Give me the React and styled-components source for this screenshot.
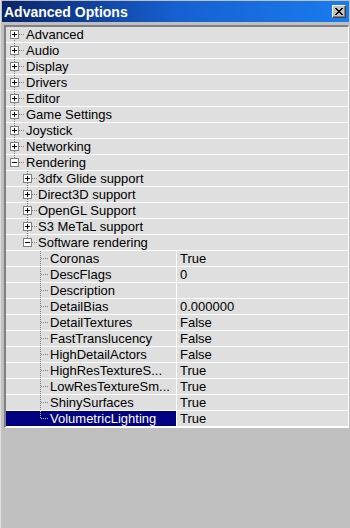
import React from 'react';
import styled, { createGlobalStyle } from 'styled-components';

const Global = createGlobalStyle`
  html, body { margin: 0; padding: 0; background: #c0c0c0; }
  body { font-family: "Liberation Sans", Arial, sans-serif; }
`;

const Window = styled.div`
  width: 350px;
  height: 528px;
  box-sizing: border-box;
  background: #c0c0c0;
  padding: 1px 0 0 1px;
  border-left: 1px solid #dfdfdf;
  display: flex;
  flex-direction: column;
`;

const TitleBar = styled.div`
  height: 21px;
  margin-right: 1px;
  background: linear-gradient(to right, #0a246a 0%, #1660d0 50%, #1a7cee 100%);
  display: flex;
  align-items: center;
  justify-content: space-between;
  padding: 0 3px 0 2px;
`;

const Title = styled.span`
  color: #fff;
  font-weight: bold;
  font-size: 14px;
`;

const CloseBtn = styled.div`
  width: 14px;
  height: 13px;
  box-sizing: border-box;
  background: #c0c0c0;
  border-top: 1px solid #fff;
  border-left: 1px solid #fff;
  border-right: 1px solid #404040;
  border-bottom: 1px solid #404040;
  box-shadow: inset -1px -1px 0 #808080;
  display: flex;
  align-items: center;
  justify-content: center;
`;

const Panel = styled.div`
  margin: 3px 2px 0 2px;
  border-top: 2px solid #808080;
  border-left: 2px solid #808080;
  border-right: 1px solid #fff;
  border-bottom: 1px solid #fff;
  background: #dfdfdf;
  width: 342px;
  box-sizing: content-box;
`;

const Row = styled.div`
  display: flex;
  height: 15px;
  border-bottom: 1px solid #fff;
  font-size: 13px;
  line-height: 15px;
  color: #000;
  white-space: nowrap;
`;

const LabelCell = styled.div`
  display: flex;
  align-items: center;
  width: ${p => (p.$full ? '340px' : '170px')};
  background: ${p => (p.$selected ? '#000080' : 'transparent')};
  color: ${p => (p.$selected ? '#fff' : '#000')};
  border-right: ${p => (p.$full ? 'none' : '1px solid #fff')};
  overflow: hidden;
`;

const ValueCell = styled.div`
  flex: 1;
  padding-left: 3px;
`;

const CloseIcon = () => (
  <svg width="8" height="7" viewBox="0 0 8 7" shapeRendering="crispEdges">
    <path d="M0 0h2v1h-2zM6 0h2v1h-2zM1 1h2v1h-2zM5 1h2v1h-2zM2 2h4v1h-4zM3 3h2v1h-2zM2 4h4v1h-4zM1 5h2v1h-2zM5 5h2v1h-2zM0 6h2v1h-2zM6 6h2v1h-2z" fill="#000" />
  </svg>
);

const TreeGuide = ({ level, top, bottom, box, selected }) => {
  const c = 13 * level - 5;
  const w = 12 * level + 8;
  const stroke = selected ? '#c0c0c0' : '#808080';
  return (
    <svg width={w} height="15" shapeRendering="crispEdges" style={{ flex: 'none' }}>
      <line x1={c + 0.5} y1={top} x2={c + 0.5} y2={bottom} stroke={stroke} strokeDasharray="1 1" />
      <line x1={c + 1} y1={7.5} x2={w - 1} y2={7.5} stroke={stroke} strokeDasharray="1 1" />
      {box && (
        <g>
          <rect x={c - 4 + 0.5} y={3.5} width="8" height="8" fill="#fff" stroke="#808080" />
          <line x1={c - 2} y1={7.5} x2={c + 3} y2={7.5} stroke="#000" />
          {box === '+' && <line x1={c + 0.5} y1={5} x2={c + 0.5} y2={10} stroke="#000" />}
        </g>
      )}
    </svg>
  );
};

const l1 = ['Advanced', 'Audio', 'Display', 'Drivers', 'Editor', 'Game Settings', 'Joystick', 'Networking', 'Rendering'];
const l2 = ['3dfx Glide support', 'Direct3D support', 'OpenGL Support', 'S3 MeTaL support', 'Software rendering'];
const l3 = [
  ['Coronas', 'True'],
  ['DescFlags', '0'],
  ['Description', ''],
  ['DetailBias', '0.000000'],
  ['DetailTextures', 'False'],
  ['FastTranslucency', 'False'],
  ['HighDetailActors', 'False'],
  ['HighResTextureS...', 'True'],
  ['LowResTextureSm...', 'True'],
  ['ShinySurfaces', 'True'],
  ['VolumetricLighting', 'True'],
];

const rows = [];
l1.forEach((label, i) => {
  rows.push({ level: 1, label, box: label === 'Rendering' ? '-' : '+', top: i === 0 ? 7 : 0, bottom: i === l1.length - 1 ? 7 : 15 });
  if (label === 'Rendering') {
    l2.forEach((l, j) => {
      rows.push({ level: 2, label: l, box: l === 'Software rendering' ? '-' : '+', top: 0, bottom: j === l2.length - 1 ? 7 : 15 });
      if (l === 'Software rendering') {
        l3.forEach(([name, value], k) => {
          rows.push({ level: 3, label: name, value, prop: true, top: 0, bottom: k === l3.length - 1 ? 7 : 15, selected: name === 'VolumetricLighting' });
        });
      }
    });
  }
});

export default function App() {
  return (
    <>
      <Global />
      <Window>
        <TitleBar>
          <Title>Advanced Options</Title>
          <CloseBtn><CloseIcon /></CloseBtn>
        </TitleBar>
        <Panel>
          {rows.map((r, i) => (
            <Row key={i}>
              <LabelCell $full={!r.prop} $selected={r.selected}>
                <TreeGuide level={r.level} top={r.top} bottom={r.bottom} box={r.box} selected={r.selected} />
                <span>{r.label}</span>
              </LabelCell>
              {r.prop && <ValueCell>{r.value}</ValueCell>}
            </Row>
          ))}
        </Panel>
      </Window>
    </>
  );
}
